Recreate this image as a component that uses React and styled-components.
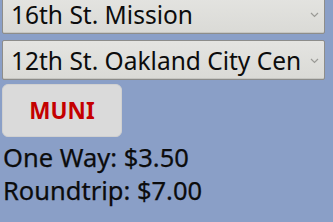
import styled, { createGlobalStyle } from "styled-components";

const GlobalStyle = createGlobalStyle`
  html, body {
    margin: 0;
    padding: 0;
    background: #8a9fc7;
  }
  body {
    font-family: "Noto Sans", "Open Sans", sans-serif;
    overflow: hidden;
  }
`;

const Page = styled.div`
  display: flex;
  flex-direction: column;
  align-items: flex-start;
  padding: 0 8px 0 2px;
  margin-top: -6px;
`;

const SelectWrap = styled.div`
  position: relative;
  width: 100%;
  margin-bottom: 6px;
`;

const Select = styled.select`
  appearance: none;
  width: 100%;
  height: 40px;
  box-sizing: border-box;
  margin: 0;
  padding: 0 23px 0 8px;
  border: 1px solid #8d8d8a;
  border-radius: 2px;
  background: linear-gradient(#e4e4e1, #dadad6);
  box-shadow: inset 0 -1px 0 #c6c6c2;
  font-family: "Noto Sans", "Open Sans", sans-serif;
  font-size: 24.5px;
  color: #0c0c0c;
  white-space: nowrap;
  overflow: hidden;
`;

const Chevron = styled.svg`
  position: absolute;
  right: 6px;
  top: 18px;
  pointer-events: none;
`;

const MuniButton = styled.button`
  width: 120px;
  height: 53px;
  margin: -2px 0 4px;
  border: 1px solid #d0d0d0;
  border-radius: 6px;
  background: #dadada;
  color: #c40000;
  font-family: "Noto Sans", "Open Sans", sans-serif;
  font-weight: 700;
  font-size: 22.5px;
  padding: 0;
`;

const FareLine = styled.div`
  color: #0c0c0c;
  font-size: 25.5px;
  line-height: 33px;
  padding-left: 1px;
  -webkit-text-stroke: 0.25px #0c0c0c;
`;

function StationSelect({ value, options }) {
  return (
    <SelectWrap>
      <Select defaultValue={value}>
        {options.map((o) => (
          <option key={o}>{o}</option>
        ))}
      </Select>
      <Chevron width="9" height="6" viewBox="0 0 9 6">
        <path d="M1 1 L4.5 4.5 L8 1" fill="none" stroke="#9a9a96" strokeWidth="1.2" />
      </Chevron>
    </SelectWrap>
  );
}

const stations = [
  "16th St. Mission",
  "12th St. Oakland City Center",
  "24th St. Mission",
  "Embarcadero",
];

export default function App() {
  return (
    <>
      <GlobalStyle />
      <Page>
        <StationSelect value="16th St. Mission" options={stations} />
        <StationSelect value="12th St. Oakland City Center" options={stations} />
        <MuniButton>MUNI</MuniButton>
        <FareLine>One Way: $3.50</FareLine>
        <FareLine>Roundtrip: $7.00</FareLine>
      </Page>
    </>
  );
}
